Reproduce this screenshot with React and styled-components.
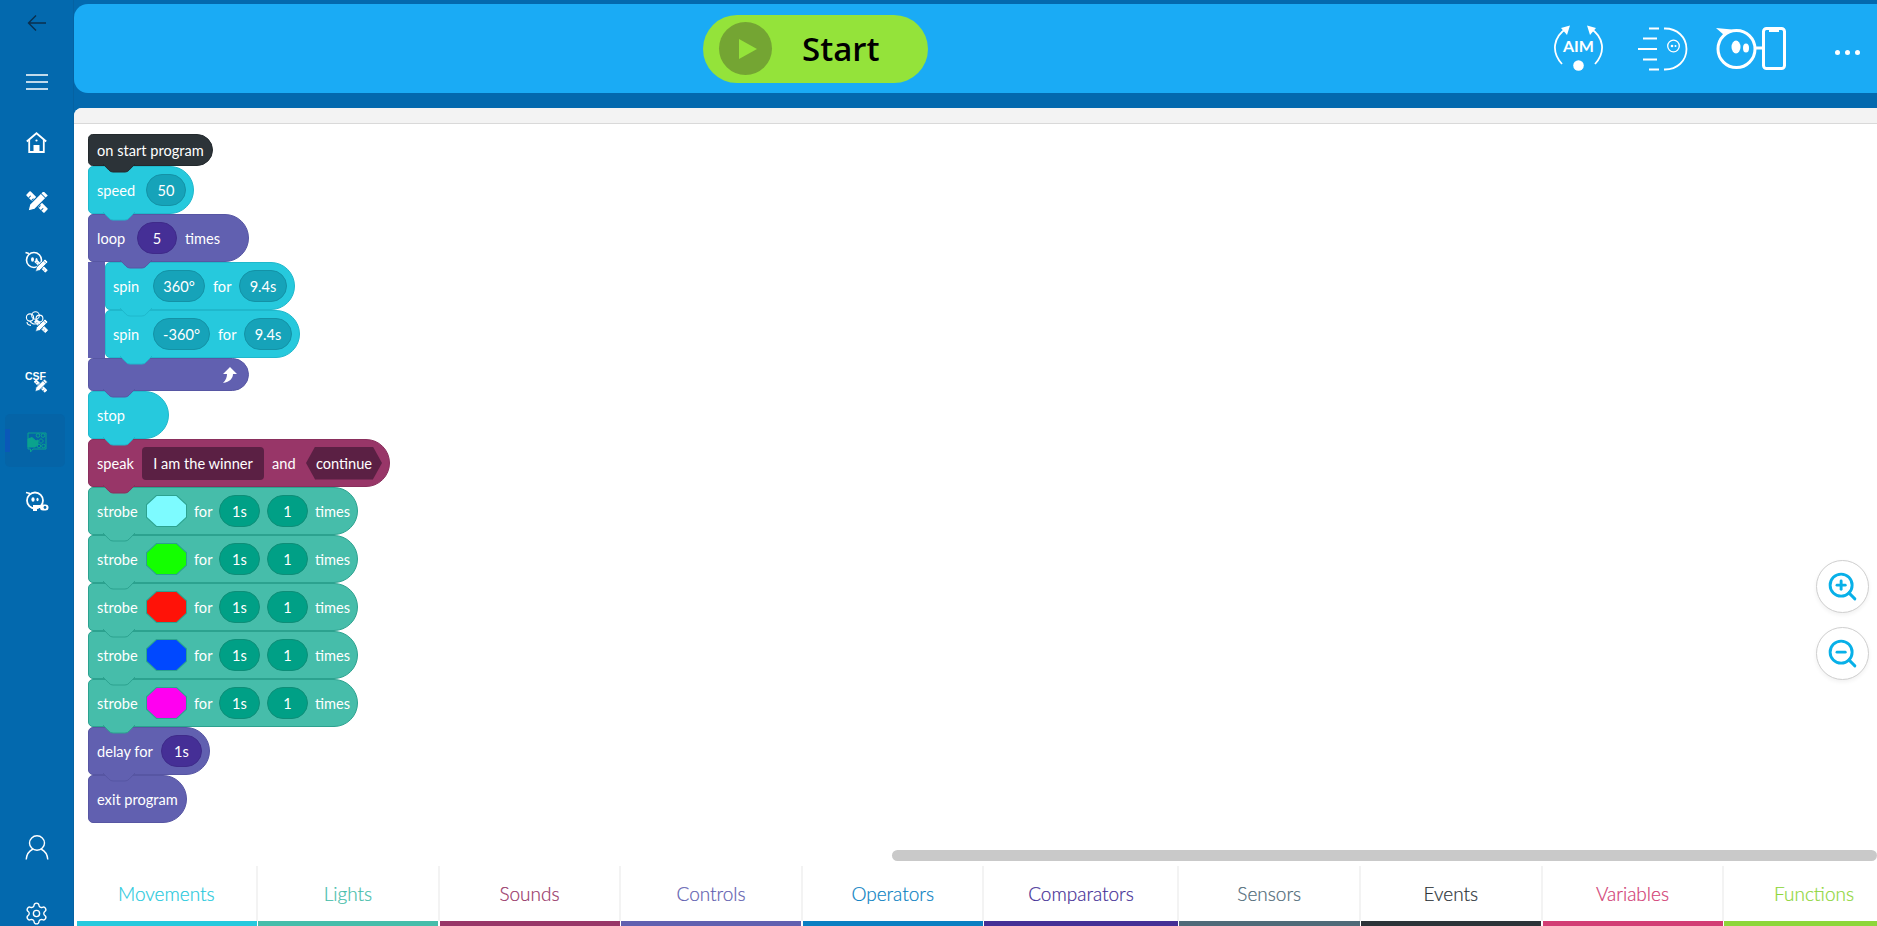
import React from 'react';
import styled, { createGlobalStyle } from 'styled-components';
import { ZoomIn, ZoomOut, Settings } from 'lucide-react';

const GlobalStyle = createGlobalStyle`
  html, body {
    margin: 0;
    height: 100%;
    overflow: hidden;
  }
  * {
    box-sizing: border-box;
  }
`;

const Page = styled.div`
  display: flex;
  width: 1877px;
  height: 926px;
  overflow: hidden;
  background: #0369ae;
  font-family: Lato, "Liberation Sans", sans-serif;
`;

const Sidebar = styled.nav`
  display: flex;
  flex-direction: column;
  flex: 0 0 74px;
  border-right: 1px solid #0562a2;
  color: #fff;
`;

const Slot = styled.div`
  position: relative;
  display: flex;
  align-items: center;
  justify-content: center;
  flex: 0 0 ${(p) => p.$height || 60}px;
  margin-bottom: ${(p) => p.$after || 0}px;
  color: ${(p) => (p.$active ? '#0aa38d' : '#fff')};
`;

const ActiveBox = styled.div`
  position: absolute;
  left: 5px;
  top: 2px;
  width: 60px;
  height: 53px;
  border-radius: 5px;
  background: #0564a7;
  &::before {
    content: '';
    position: absolute;
    left: 0;
    top: 15px;
    width: 5px;
    height: 23px;
    background: #0a58b8;
  }
`;

const SlotIcon = styled.span`
  position: relative;
  display: flex;
`;

const SidebarFoot = styled.div`
  display: flex;
  flex-direction: column;
  margin-top: auto;
`;

const Main = styled.div`
  display: flex;
  flex-direction: column;
  flex: 1;
  min-width: 0;
  padding-top: 4px;
`;

const Header = styled.header`
  display: flex;
  align-items: center;
  flex: 0 0 89px;
  margin-bottom: 15px;
  padding: 0 17px 0 629px;
  border-radius: 14px 0 0 14px;
  background: #1aabf5;
  color: #fff;
`;

const StartButton = styled.button`
  display: flex;
  align-items: center;
  width: 225px;
  height: 68px;
  padding: 0 0 0 16px;
  border: none;
  border-radius: 34px;
  background: #94e33a;
  color: #000;
  font-family: "Open Sans", sans-serif;
  font-size: 33px;
  font-weight: 600;
`;

const PlayCircle = styled.span`
  display: flex;
  align-items: center;
  justify-content: center;
  width: 53px;
  height: 53px;
  margin-right: 30px;
  padding-left: 4px;
  border-radius: 50%;
  background: #74a533;
`;

const HeaderIcons = styled.div`
  display: flex;
  align-items: center;
  margin-left: auto;
`;

const HeaderIcon = styled.span`
  display: flex;
  margin-right: ${(p) => p.$gap}px;
`;

const Dots = styled.span`
  display: flex;
  gap: 5px;
  margin-top: 7px;
  span {
    width: 5px;
    height: 5px;
    border-radius: 50%;
    background: #fff;
  }
`;

const Canvas = styled.main`
  display: flex;
  flex-direction: column;
  flex: 1;
  min-height: 0;
  border-radius: 8px 0 0 0;
  background: #fff;
  overflow: hidden;
`;

const Strip = styled.div`
  flex: 0 0 16px;
  border-bottom: 1px solid #d9d9d9;
  background: #f3f3f3;
`;

const Workspace = styled.div`
  position: relative;
  flex: 1;
  min-height: 0;
  padding: 10px 14px 0;
`;

const Stack = styled.div`
  display: flex;
  flex-direction: column;
  align-items: flex-start;
`;

const Block = styled.div`
  position: relative;
  display: flex;
  align-items: center;
  gap: ${(p) => p.$gap ?? 8}px;
  flex: 0 0 auto;
  width: ${(p) => (p.$width ? `${p.$width}px` : 'auto')};
  height: ${(p) => p.$height || 48}px;
  padding: 0 7px 0 8px;
  border: 1px solid ${(p) => p.$edge};
  border-radius: ${(p) => (p.$height ? '5px 17px 17px 5px' : '5px 24px 24px 5px')};
  background: ${(p) => p.$fill};
  color: #fff;
  font-size: 14.6px;
  white-space: nowrap;
`;

const Label = styled.span`
  flex: 0 0 auto;
  width: ${(p) => (p.$width ? `${p.$width}px` : 'auto')};
  margin-right: ${(p) => p.$extra || 0}px;
`;

const Pill = styled.span`
  display: flex;
  align-items: center;
  justify-content: center;
  flex: 0 0 auto;
  width: ${(p) => p.$width || 41}px;
  height: 32px;
  border: 1px solid ${(p) => p.$edge};
  border-radius: 16px;
  background: ${(p) => p.$fill};
`;

const TextField = styled.span`
  display: flex;
  align-items: center;
  justify-content: center;
  width: 122px;
  height: 33px;
  border-radius: 4px;
  background: #5b2044;
`;

const HexField = styled.span`
  display: flex;
  align-items: center;
  justify-content: center;
  width: 76px;
  height: 33px;
  background: #5b2044;
  clip-path: polygon(12% 0, 88% 0, 100% 50%, 88% 100%, 12% 100%, 0 50%);
`;

const ColorEdge = styled.span`
  flex: 0 0 41px;
  width: 41px;
  height: 32px;
  padding: 1px;
  background: #2ca28f;
  clip-path: polygon(25% 0, 75% 0, 100% 30%, 100% 70%, 75% 100%, 25% 100%, 0 70%, 0 30%);
`;

const ColorFace = styled.span`
  display: block;
  width: 100%;
  height: 100%;
  background: ${(p) => p.$color};
  clip-path: polygon(25% 0, 75% 0, 100% 30%, 100% 70%, 75% 100%, 25% 100%, 0 70%, 0 30%);
`;

const Tab = styled.svg`
  position: absolute;
  left: ${(p) => p.$left}px;
  top: 100%;
  z-index: 2;
  margin-top: -1px;
`;

const LoopBody = styled.div`
  display: flex;
  flex-direction: column;
  align-items: flex-start;
  border-left: 17px solid #6160b0;
  & > div {
    padding-left: 7px;
  }
`;

const FootArrow = styled.span`
  display: flex;
  margin-left: auto;
  margin-right: 4px;
`;

const ZoomColumn = styled.div`
  position: absolute;
  top: 436px;
  right: 8px;
  display: flex;
  flex-direction: column;
  gap: 14px;
`;

const ZoomButton = styled.button`
  display: flex;
  align-items: center;
  justify-content: center;
  width: 53px;
  height: 53px;
  padding: 0;
  border: 1px solid #cfcfcf;
  border-radius: 50%;
  background: #fff;
  color: #08b0e8;
  box-shadow: 0 2px 4px rgba(0, 0, 0, 0.06);
`;

const ScrollRow = styled.div`
  flex: 0 0 16px;
  padding: 0 0 5px 818px;
`;

const ScrollThumb = styled.div`
  height: 11px;
  border-radius: 6px;
  background: #c9c9c9;
`;

const TabBar = styled.div`
  display: flex;
  flex: 0 0 60px;
  padding-left: 2.5px;
  overflow: hidden;
`;

const Category = styled.div`
  display: flex;
  flex-direction: column;
  flex: 0 0 ${(p) => p.$width}px;
`;

const CategoryLabel = styled.div`
  display: flex;
  align-items: center;
  justify-content: center;
  flex: 1;
  border-right: 2px solid #f3f3f3;
  color: ${(p) => p.$color};
  font-size: 19px;
  font-weight: 300;
  -webkit-text-stroke: 0.2px currentColor;
`;

const CategoryBar = styled.div`
  flex: 0 0 5px;
  margin-right: 1.5px;
  background: ${(p) => p.$color};
`;

const cyan = { fill: '#26c9dd', edge: '#1fb8cc', pill: '#16a3b9', pillEdge: '#1492a6' };
const purple = { fill: '#6160b0', edge: '#5756a3', pill: '#452f96', pillEdge: '#3f2b8a' };
const teal = { fill: '#46bdaa', edge: '#2ca28f', pill: '#00a086', pillEdge: '#0e8e78' };
const plum = { fill: '#983668', edge: '#8a2f5d' };
const dark = { fill: '#2c3338', edge: '#23292d' };

const strobes = ['#7dfbff', '#14ff00', '#ff1208', '#0048ff', '#ff00f0'];

const categories = [
  ['Movements', '#26c9dd', 181.6],
  ['Lights', '#46bdaa', 181.6],
  ['Sounds', '#983668', 181.6],
  ['Controls', '#6160b0', 181.6],
  ['Operators', '#0a7fc2', 181.6],
  ['Comparators', '#452f96', 195],
  ['Sensors', '#4f6a78', 181.6],
  ['Events', '#2c3338', 181.6],
  ['Variables', '#d23d74', 181.6],
  ['Functions', '#8ed63a', 181.6],
];

const BlockTab = ({ theme, left = 14 }) => (
  <Tab $left={left} width="32" height="9" viewBox="0 0 32 9">
    <path d="M0 0 L6 6.2 Q7.5 8 10 8 H22 Q24.5 8 26 6.2 L32 0 Z" fill={theme.fill} />
    <path d="M0 0 L6 6.2 Q7.5 8 10 8 H22 Q24.5 8 26 6.2 L32 0" fill="none" stroke={theme.edge} />
  </Tab>
);

const Value = ({ theme, width, children }) => (
  <Pill $fill={theme.pill} $edge={theme.pillEdge} $width={width}>{children}</Pill>
);

const ProgramBlock = ({ theme, tab = true, tabLeft, children, ...rest }) => (
  <Block $fill={theme.fill} $edge={theme.edge} {...rest}>
    {children}
    {tab && <BlockTab theme={theme} left={tabLeft} />}
  </Block>
);

const ToolCross = ({ x, y, s }) => (
  <g transform={`translate(${x} ${y}) scale(${s})`}>
    <g transform="rotate(-45)">
      <rect x="-3" y="-13" width="6" height="26" rx="1" fill="currentColor" />
      <path d="M-3 -9h3M-3 -5h3M-3 5h3M-3 9h3" stroke="#0369ae" strokeWidth="1" />
    </g>
    <g transform="rotate(45)">
      <path d="M-3.6 -13h7.2v20l-3.6 6l-3.6 -6z" fill="currentColor" stroke="#0369ae" strokeWidth="1.2" />
      <path d="M-3.6 -9h7.2" stroke="#0369ae" strokeWidth="1" />
    </g>
  </g>
);

const BackIcon = () => (
  <svg width="20" height="18" viewBox="0 0 20 18" fill="none" stroke="#0b2f4e" strokeWidth="1.4">
    <path d="M19 9H1.5M9 1.5L1.5 9L9 16.5" />
  </svg>
);

const MenuIcon = () => (
  <svg width="22" height="16" viewBox="0 0 22 16" stroke="currentColor" strokeWidth="1.3">
    <path d="M0 1h22M0 8h22M0 15h22" />
  </svg>
);

const HomeIcon = () => (
  <svg width="21" height="21" viewBox="0 0 21 21" fill="none" stroke="currentColor" strokeWidth="1.8">
    <path d="M0.8 9.5L10.5 1.2L20.2 9.5" />
    <path d="M3.2 8v12h14.6V8" />
    <circle cx="10.5" cy="8.5" r="1.1" fill="currentColor" stroke="none" />
    <rect x="7.5" y="13" width="6" height="7.5" fill="currentColor" stroke="none" />
  </svg>
);

const ToolsIcon = () => (
  <svg width="22" height="22" viewBox="0 0 22 22">
    <ToolCross x={11} y={11} s={0.98} />
  </svg>
);

const RobotEditIcon = () => (
  <svg width="24" height="23" viewBox="0 0 24 23">
    <circle cx="9" cy="9" r="7.5" fill="none" stroke="currentColor" strokeWidth="1.6" />
    <path d="M0.5 1.5L4 2.5" stroke="currentColor" strokeWidth="1.6" />
    <ellipse cx="7.5" cy="8.5" rx="1.5" ry="2.2" fill="currentColor" />
    <ellipse cx="11.5" cy="8.5" rx="1" ry="1.6" fill="currentColor" />
    <ToolCross x={16} y={15} s={0.6} />
  </svg>
);

const CommunityIcon = () => (
  <svg width="24" height="23" viewBox="0 0 24 23" fill="none" stroke="currentColor" strokeWidth="1.1">
    <circle cx="5" cy="6.5" r="3.6" />
    <circle cx="10.5" cy="4.5" r="3.8" />
    <circle cx="14.5" cy="7.5" r="3.4" />
    <path d="M2 11c0 2 2 3.2 4 3.4M5 10c1 3 5 4 8 2" />
    <ToolCross x={16} y={15} s={0.6} />
  </svg>
);

const CsfIcon = () => (
  <svg width="24" height="23" viewBox="0 0 24 23">
    <text x="0" y="9" fill="currentColor" fontFamily="Liberation Sans" fontWeight="700" fontSize="10.5">CSF</text>
    <ToolCross x={15.5} y={15} s={0.6} />
  </svg>
);

const BoardIcon = () => (
  <svg width="20" height="21" viewBox="0 0 20 21" fill="none" stroke="currentColor" strokeWidth="1">
    <path d="M1 1h18v16H6l-2.5 3V17H1z" />
    <path d="M1 7l4-1.5L9 9l2-1v5l-3 2H1z" fill="currentColor" />
    <circle cx="11" cy="3.5" r="1.8" />
    <circle cx="16" cy="3.5" r="1.8" />
    <circle cx="12" cy="14" r="1.8" />
    <circle cx="16.5" cy="14" r="1.8" />
    <path d="M14 6.5l2.5 2.5l-2.5 2.5l-2.5-2.5z" />
  </svg>
);

const RobotLinkIcon = () => (
  <svg width="24" height="23" viewBox="0 0 24 23">
    <circle cx="10" cy="9.5" r="8" fill="none" stroke="currentColor" strokeWidth="1.8" />
    <path d="M1 1.5L5 2.5" stroke="currentColor" strokeWidth="1.8" />
    <ellipse cx="8" cy="8.5" rx="1.6" ry="2.3" fill="currentColor" />
    <ellipse cx="12.5" cy="8.5" rx="1.1" ry="1.7" fill="currentColor" />
    <path d="M8 14h8v3h-4v3H8z" fill="currentColor" />
    <rect x="15" y="13.5" width="8.5" height="6" rx="3" fill="currentColor" />
    <circle cx="20" cy="16.5" r="1.4" fill="#0369ae" />
  </svg>
);

const UserIcon = () => (
  <svg width="24" height="25" viewBox="0 0 24 25" fill="none" stroke="currentColor" strokeWidth="1.4">
    <ellipse cx="12" cy="8" rx="7.5" ry="7.2" />
    <path d="M1.2 24.5C1.6 18.5 5 15.5 8 14M22.8 24.5C22.4 18.5 19 15.5 16 14" />
  </svg>
);

const PlayIcon = () => (
  <svg width="18" height="20" viewBox="0 0 18 20">
    <path d="M0 0L18 10L0 20Z" fill="#94e33a" />
  </svg>
);

const AimIcon = () => (
  <svg width="50" height="47" viewBox="0 0 50 47" fill="none" stroke="currentColor" strokeWidth="1.8">
    <path d="M8 39C-3 27 -1 12 13 3" />
    <path d="M41 39C52 27 50 12 36 3" />
    <path d="M16 0.5L7 3L13 10Z" fill="currentColor" stroke="none" />
    <path d="M33 0.5L42 3L36 10Z" fill="currentColor" stroke="none" />
    <text x="24.5" y="27" textAnchor="middle" fill="currentColor" stroke="none" fontFamily="Lato" fontWeight="700" fontSize="16">AIM</text>
    <circle cx="24.5" cy="40.5" r="5.3" fill="currentColor" stroke="none" />
  </svg>
);

const SpeedIcon = () => (
  <svg width="50" height="44" viewBox="0 0 50 44" fill="none" stroke="currentColor" strokeWidth="1.8">
    <path d="M11 1.5h10M5 11.5h14M0 22h19M5 32.5h14M11 42.5h10" />
    <path d="M26 1.5h1C39 1.5 48.5 10 48.5 22S39 42.5 27 42.5h-1" />
    <circle cx="35.5" cy="19" r="5.8" strokeWidth="1.3" />
    <circle cx="34" cy="19" r="1.3" fill="currentColor" stroke="none" />
    <circle cx="37.5" cy="19" r="1" fill="currentColor" stroke="none" />
  </svg>
);

const RobotPhoneIcon = () => (
  <svg width="70" height="43" viewBox="0 0 70 43" fill="none" stroke="currentColor" strokeWidth="3">
    <circle cx="20.5" cy="22" r="18.5" />
    <path d="M0 1L16 2.5L8 8Z" fill="currentColor" stroke="none" />
    <ellipse cx="20" cy="20" rx="4.5" ry="6.5" fill="currentColor" stroke="none" />
    <ellipse cx="30" cy="21" rx="3" ry="4.5" fill="currentColor" stroke="none" />
    <path d="M38 21h9" />
    <rect x="47.5" y="1.5" width="21" height="40" rx="3" />
    <path d="M53 3h10v2H53z" fill="currentColor" stroke="none" />
  </svg>
);

const LoopArrow = () => (
  <svg width="15" height="16" viewBox="0 0 15 16">
    <path d="M8 0L15 7H11C11 11 8 15 1 16C4 13 5 10 5 7H1Z" fill="#fff" />
  </svg>
);

const sideIcons = [
  [MenuIcon, false],
  [HomeIcon, false],
  [ToolsIcon, false],
  [RobotEditIcon, false],
  [CommunityIcon, false],
  [CsfIcon, false],
  [BoardIcon, true],
  [RobotLinkIcon, false],
];

const SpinBlock = ({ angle, angleWidth }) => (
  <ProgramBlock theme={cyan}>
    <Label $width={26} $extra={6}>spin</Label>
    <Value theme={cyan} width={angleWidth}>{angle}</Value>
    <Label $width={18}>for</Label>
    <Value theme={cyan} width={48}>9.4s</Value>
  </ProgramBlock>
);

const App = () => (
  <Page>
    <GlobalStyle />
    <Sidebar>
      <Slot $height={46} $after={6}><BackIcon /></Slot>
      {sideIcons.map(([Icon, active], index) => (
        <Slot key={index} $active={active}>
          {active && <ActiveBox />}
          <SlotIcon><Icon /></SlotIcon>
        </Slot>
      ))}
      <SidebarFoot>
        <Slot $height={50} $after={28}><UserIcon /></Slot>
        <Slot $height={26}><Settings size={25} strokeWidth={1.3} /></Slot>
      </SidebarFoot>
    </Sidebar>
    <Main>
      <Header>
        <StartButton>
          <PlayCircle><PlayIcon /></PlayCircle>
          Start
        </StartButton>
        <HeaderIcons>
          <HeaderIcon $gap={34}><AimIcon /></HeaderIcon>
          <HeaderIcon $gap={28}><SpeedIcon /></HeaderIcon>
          <HeaderIcon $gap={49}><RobotPhoneIcon /></HeaderIcon>
          <Dots><span /><span /><span /></Dots>
        </HeaderIcons>
      </Header>
      <Canvas>
        <Strip />
        <Workspace>
          <Stack>
            <ProgramBlock theme={dark} $height={32} $width={125}>on start program</ProgramBlock>
            <ProgramBlock theme={cyan}>
              <Label $width={41}>speed</Label>
              <Value theme={cyan} width={40}>50</Value>
            </ProgramBlock>
            <ProgramBlock theme={purple} tabLeft={31} $width={161}>
              <Label $width={29} $extra={3}>loop</Label>
              <Value theme={purple} width={40}>5</Value>
              <Label>times</Label>
            </ProgramBlock>
            <LoopBody>
              <SpinBlock angle="360°" angleWidth={52} />
              <SpinBlock angle="-360°" angleWidth={57} />
            </LoopBody>
            <ProgramBlock theme={purple} $height={33} $width={161}>
              <FootArrow><LoopArrow /></FootArrow>
            </ProgramBlock>
            <ProgramBlock theme={cyan} $width={81}>stop</ProgramBlock>
            <ProgramBlock theme={plum}>
              <Label $width={37}>speak</Label>
              <TextField>I am the winner</TextField>
              <Label $width={26}>and</Label>
              <HexField>continue</HexField>
            </ProgramBlock>
            {strobes.map((color) => (
              <ProgramBlock theme={teal} key={color} $gap={7}>
                <Label $width={42}>strobe</Label>
                <ColorEdge><ColorFace $color={color} /></ColorEdge>
                <Label $width={18}>for</Label>
                <Value theme={teal}>1s</Value>
                <Value theme={teal}>1</Value>
                <Label $width={35}>times</Label>
              </ProgramBlock>
            ))}
            <ProgramBlock theme={purple} $width={122}>
              <Label $width={56}>delay for</Label>
              <Value theme={purple}>1s</Value>
            </ProgramBlock>
            <ProgramBlock theme={purple} tab={false} $width={99}>exit program</ProgramBlock>
          </Stack>
          <ZoomColumn>
            <ZoomButton><ZoomIn size={33} strokeWidth={2.1} /></ZoomButton>
            <ZoomButton><ZoomOut size={33} strokeWidth={2.1} /></ZoomButton>
          </ZoomColumn>
        </Workspace>
        <ScrollRow><ScrollThumb /></ScrollRow>
        <TabBar>
          {categories.map(([name, color, width]) => (
            <Category key={name} $width={width}>
              <CategoryLabel $color={color}>{name}</CategoryLabel>
              <CategoryBar $color={color} />
            </Category>
          ))}
        </TabBar>
      </Canvas>
    </Main>
  </Page>
);

export default App;
